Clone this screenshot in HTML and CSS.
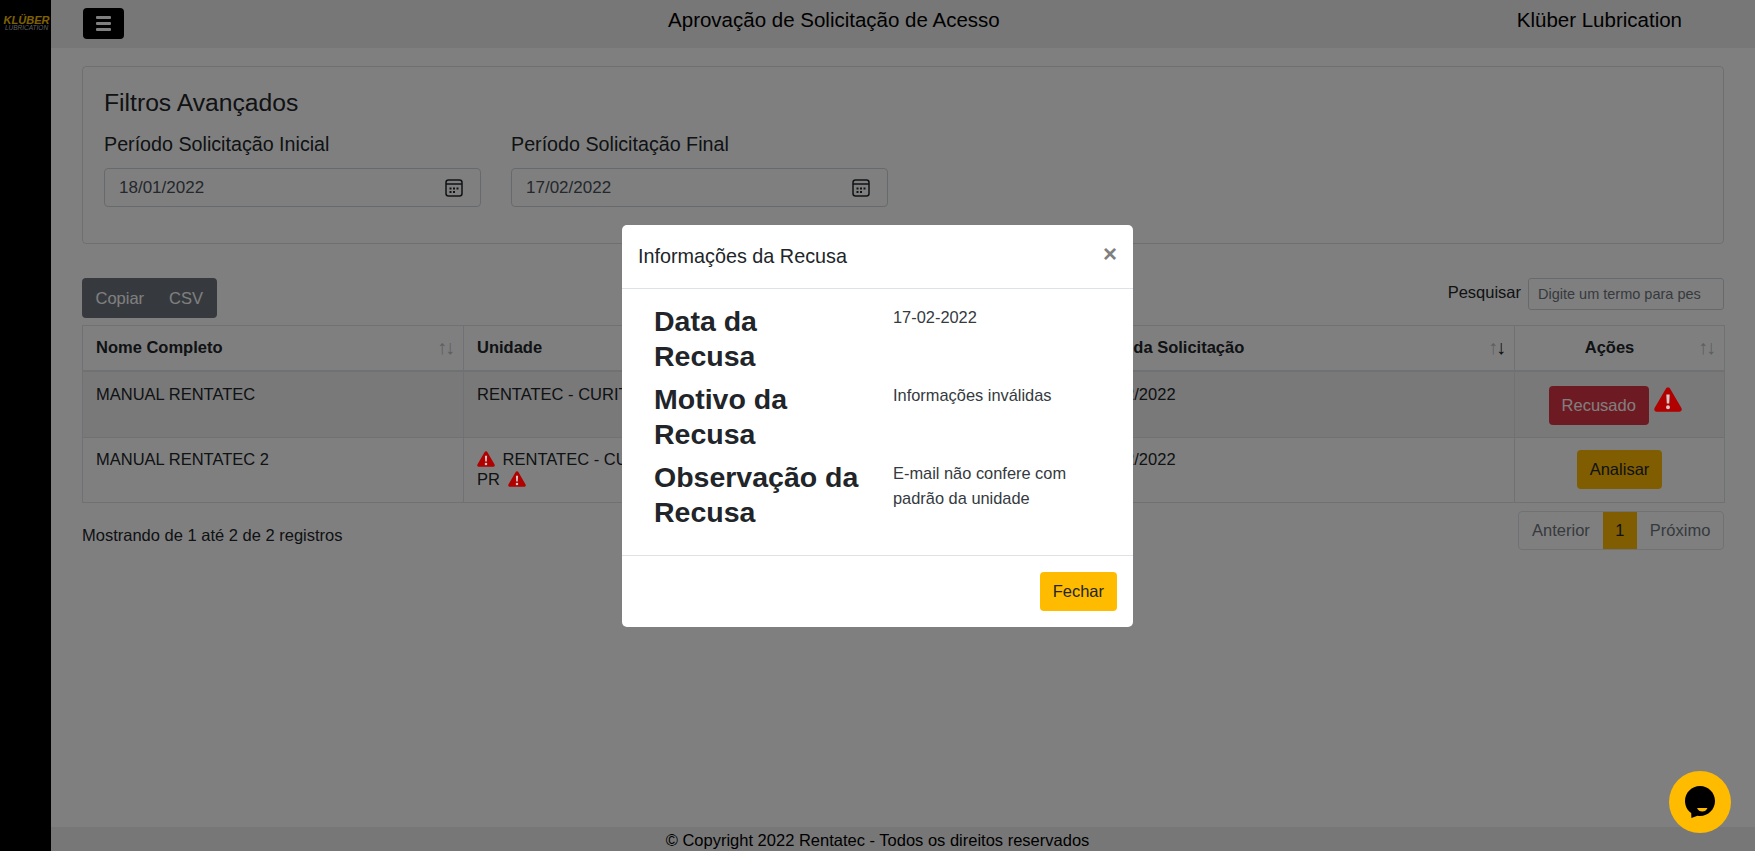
FILE: index.html
```html
<!DOCTYPE html>
<html lang="pt-BR">
<head>
    <meta charset="UTF-8">
    <meta name="viewport" content="width=device-width, initial-scale=1.0">
    <title>Aprovação de Solicitação de Acesso</title>
    <link rel="stylesheet" href="styles.css">
</head>
<body>
    <svg class="icon-defs" width="0" height="0">
        <symbol id="warn" viewBox="0 0 28 25">
            <path d="M14 0.5c-1 0-1.8.5-2.3 1.4L.6 21c-1 1.7.2 3.8 2.2 3.8h22.4c2 0 3.200-2.100 2.200-3.800L16.300 1.900C15.800 1 15 .5 14 .5z" fill="currentColor"/>
            <path d="M12.300 7.500h3.400l-.5 9h-2.400zM14 18.200a2 2 0 1 1 0 4 2 2 0 0 1 0-4z" fill="#d8c8c8"/>
        </symbol>
        <symbol id="calendar" viewBox="0 0 18 18">
            <rect x="1" y="1" width="16" height="16" rx="2.500" fill="none" stroke="currentColor" stroke-width="1.500"/>
            <path d="M1 5h16" stroke="currentColor" stroke-width="1.500"/>
            <path d="M4.500 8.500h2v2h-2zM8 8.500h2v2H8zM11.500 8.500h2v2h-2zM4.500 12h2v2h-2zM8 12h2v2H8z" fill="currentColor"/>
        </symbol>
    </svg>

    <div class="layout">
        <aside class="sidebar">
            <div class="logo">
                <span class="logo-name">KLÜBER</span>
                <span class="logo-sub">LUBRICATION</span>
            </div>
        </aside>

        <div class="page">
            <header class="topbar">
                <button class="menu-btn" type="button" aria-label="Menu">
                    <span></span><span></span><span></span>
                </button>
                <div class="topbar-title">Aprovação de Solicitação de Acesso</div>
                <div class="topbar-company">Klüber Lubrication</div>
            </header>

            <main class="content">
                <section class="filters">
                    <h2>Filtros Avançados</h2>
                    <div class="filter-row">
                        <div class="filter">
                            <label>Período Solicitação Inicial</label>
                            <div class="date-field">
                                <span>18/01/2022</span>
                                <svg class="calendar-icon"><use href="#calendar"/></svg>
                            </div>
                        </div>
                        <div class="filter">
                            <label>Período Solicitação Final</label>
                            <div class="date-field">
                                <span>17/02/2022</span>
                                <svg class="calendar-icon"><use href="#calendar"/></svg>
                            </div>
                        </div>
                    </div>
                </section>

                <div class="toolbar">
                    <div class="export-group">
                        <button type="button">Copiar</button>
                        <button type="button">CSV</button>
                    </div>
                    <div class="search">
                        <label for="search-input">Pesquisar</label>
                        <input id="search-input" type="text" placeholder="Digite um termo para pesquisar">
                    </div>
                </div>

                <table class="requests">
                    <colgroup>
                        <col class="col-name">
                        <col class="col-unit">
                        <col class="col-mail">
                        <col class="col-date">
                        <col class="col-actions">
                    </colgroup>
                    <thead>
                        <tr>
                            <th><div class="th-inner">Nome Completo<span class="sort"><i>↑</i><i>↓</i></span></div></th>
                            <th><div class="th-inner">Unidade<span class="sort"><i>↑</i><i>↓</i></span></div></th>
                            <th><div class="th-inner">E-mail<span class="sort"><i>↑</i><i>↓</i></span></div></th>
                            <th><div class="th-inner">Data da Solicitação<span class="sort"><i>↑</i><i class="on">↓</i></span></div></th>
                            <th><div class="th-inner th-center"><span class="th-label">Ações</span><span class="sort"><i>↑</i><i>↓</i></span></div></th>
                        </tr>
                    </thead>
                    <tbody>
                        <tr class="striped">
                            <td>MANUAL RENTATEC</td>
                            <td>RENTATEC - CURITIBA - PR</td>
                            <td></td>
                            <td>17/02/2022</td>
                            <td class="actions">
                                <button class="btn btn-red" type="button">Recusado</button>
                                <svg class="warn-big"><use href="#warn"/></svg>
                            </td>
                        </tr>
                        <tr>
                            <td>MANUAL RENTATEC 2</td>
                            <td><svg class="warn-small"><use href="#warn"/></svg> RENTATEC - CURITIBA - PR <svg class="warn-small warn-after"><use href="#warn"/></svg></td>
                            <td></td>
                            <td>17/02/2022</td>
                            <td class="actions">
                                <button class="btn btn-yellow" type="button">Analisar</button>
                            </td>
                        </tr>
                    </tbody>
                </table>

                <div class="table-footer">
                    <div class="table-info">Mostrando de 1 até 2 de 2 registros</div>
                    <div class="pagination">
                        <a href="#">Anterior</a>
                        <a href="#" class="current">1</a>
                        <a href="#">Próximo</a>
                    </div>
                </div>
            </main>

            <footer class="copyright">© Copyright 2022 Rentatec - Todos os direitos reservados</footer>
        </div>
    </div>

    <div class="backdrop"></div>

    <div class="modal-wrap">
        <div class="modal">
            <div class="modal-header">
                <h5>Informações da Recusa</h5>
                <button class="modal-close" type="button" aria-label="Fechar">×</button>
            </div>
            <div class="modal-body">
                <div class="info-row">
                    <h3>Data da Recusa</h3>
                    <p>17-02-2022</p>
                </div>
                <div class="info-row">
                    <h3>Motivo da Recusa</h3>
                    <p>Informações inválidas</p>
                </div>
                <div class="info-row">
                    <h3>Observação da Recusa</h3>
                    <p>E-mail não confere com padrão da unidade</p>
                </div>
            </div>
            <div class="modal-footer">
                <button class="btn btn-yellow" type="button">Fechar</button>
            </div>
        </div>
    </div>

    <button class="chat-btn" type="button" aria-label="Chat">
        <svg viewBox="0 0 32 34" width="32" height="34">
            <path d="M16 1C7.700 1 1 7.700 1 16c0 5 2.400 9.400 6.200 12.100L7.400 33l6.100-2.300c.8.2 1.700.3 2.500.3 8.300 0 15-6.700 15-15S24.300 1 16 1z" fill="#000"/>
            <path d="M13 23h10.500c-1 2.400-2.900 3.500-5.200 3.500S14 25.400 13 23z" fill="#ffbb00"/>
        </svg>
    </button>
</body>
</html>
```

FILE: styles.css
```css
* {
    box-sizing: border-box;
}
html, body {
    height: 100%;
}
body {
    margin: 0;
    font-family: "Liberation Sans", Arial, sans-serif;
    font-size: 16.500px;
    line-height: 24px;
    color: #212529;
    background: #fff;
    overflow: hidden;
}
button {
    font-family: inherit;
}
.icon-defs {
    position: absolute;
}
.layout {
    display: flex;
    height: 851px;
}

/* sidebar */
.sidebar {
    width: 51px;
    flex: none;
    background: #000;
    padding: 15px 0 0 2px;
}
.logo {
    display: flex;
    flex-direction: column;
    align-items: center;
    font-style: italic;
}
.logo-name {
    color: #ffc400;
    font-size: 11px;
    font-weight: 700;
    line-height: 10px;
}
.logo-sub {
    color: #bbb;
    font-size: 6.500px;
    line-height: 6px;
}

/* top bar */
.page {
    flex: 1;
    min-width: 0;
    display: flex;
    flex-direction: column;
}
.topbar {
    height: 48px;
    flex: none;
    background: #eee;
    padding: 0 73px 0 32px;
    display: flex;
    align-items: center;
    justify-content: space-between;
    font-size: 20.500px;
    color: #000;
}
.menu-btn {
    width: 41px;
    height: 31px;
    margin-top: -2px;
    background: #000;
    border: none;
    border-radius: 4px;
    display: flex;
    flex-direction: column;
    align-items: center;
    justify-content: center;
    gap: 3px;
    padding: 0;
}
.menu-btn span {
    width: 15px;
    height: 3px;
    background: #fff;
    border-radius: 1px;
}
.topbar-title {
    margin-left: 27px;
    margin-top: -8px;
}
.topbar-company {
    margin-top: -8px;
}

/* filters */
.content {
    flex: 1;
    padding: 18px 31px 0;
}
.filters {
    height: 178px;
    border: 1px solid rgba(0,0,0,.125);
    border-radius: 4px;
    padding: 21px;
}
.filters h2 {
    margin: 0;
    font-size: 24.700px;
    font-weight: 400;
    line-height: 29px;
}
.filter-row {
    display: flex;
    gap: 30px;
    margin-top: 12px;
}
.filter {
    width: 377px;
}
.filter label {
    display: block;
    font-size: 19.700px;
    line-height: 30px;
    margin-bottom: 9px;
}
.date-field {
    height: 39px;
    border: 1px solid #ced4da;
    border-radius: 4px;
    padding: 0 17px 0 14px;
    display: flex;
    align-items: center;
    justify-content: space-between;
    color: #495057;
    font-size: 17px;
}
.calendar-icon {
    width: 18px;
    height: 18px;
    color: #212529;
}

/* export buttons and search */
.toolbar {
    display: flex;
    justify-content: space-between;
    margin-top: 34px;
    height: 47px;
}
.export-group {
    display: flex;
    height: 40px;
    background: #6c757d;
    border-radius: 4px;
    padding: 0 1px;
}
.export-group button {
    background: none;
    border: none;
    color: #fff;
    font-size: 16.500px;
    padding: 0 12.500px;
}
.search {
    display: flex;
    align-items: flex-start;
    gap: 7px;
}
.search label {
    line-height: 28px;
}
.search input {
    width: 196px;
    height: 32px;
    margin-top: 0;
    border: 1px solid #ced4da;
    border-radius: 3px;
    padding: 0 22px 0 9px;
    font-family: inherit;
    font-size: 14.500px;
    background: #fff;
}
.search input::placeholder {
    color: #6c757d;
}

/* table */
.requests {
    width: 100%;
    table-layout: fixed;
    border-collapse: collapse;
}
.col-name { width: 381px; }
.col-unit { width: 245px; }
.col-mail { width: 371px; }
.col-date { width: 435px; }
.col-actions { width: 210px; }
.requests th, .requests td {
    border: 1px solid #dee2e6;
    text-align: left;
    vertical-align: top;
}
.requests th {
    height: 45px;
    padding: 0 9px 2px 13px;
    vertical-align: middle;
    border-bottom-width: 2px;
}
.th-inner {
    display: flex;
    align-items: center;
    justify-content: space-between;
}
.th-label {
    flex: 1;
    text-align: center;
    padding-right: 8px;
}
.sort {
    display: flex;
    font-weight: 400;
    font-size: 20px;
    line-height: 20px;
}
.sort i {
    font-style: normal;
    width: 8px;
    text-align: center;
    opacity: .3;
    display: flex;
    justify-content: center;
}
.sort i.on {
    opacity: 1;
}
.requests td {
    padding: 11px 13px 0;
    height: 65px;
    line-height: 20px;
}
.requests .striped td {
    height: 67px;
    padding-top: 12px;
    background: rgba(0,0,0,.05);
}
.requests td.actions {
    padding: 12px 0 0;
    text-align: center;
}
.requests .striped td.actions {
    padding: 14px 8px 0 0;
}
.warn-big {
    width: 28px;
    height: 25px;
    color: #b00000;
    position: relative;
    z-index: 1060;
    vertical-align: top;
    margin: 1px 0 0 1px;
}
.warn-small {
    width: 18px;
    height: 16px;
    color: #b00000;
    position: relative;
    z-index: 1060;
    vertical-align: -2px;
    margin-right: 3px;
}
.warn-after {
    margin-left: 3px;
}

/* buttons */
.btn {
    height: 39px;
    border: none;
    border-radius: 4px;
    font-size: 16.500px;
    padding: 0 13px;
    vertical-align: top;
}
.btn-red {
    background: #dc3545;
    color: #fff;
}
.btn-yellow {
    background: #ffbb00;
    color: #212529;
}

/* table footer */
.table-footer {
    display: flex;
    justify-content: space-between;
    margin-top: 8px;
}
.table-info {
    margin-top: 12px;
}
.pagination {
    display: flex;
    height: 39px;
    border: 1px solid #dee2e6;
    border-radius: 4px;
    line-height: 36px;
}
.pagination a {
    padding: 0 12.700px;
    color: #6c757d;
    text-decoration: none;
}
.pagination a.current {
    background: #ffbb00;
    color: #212529;
}

.copyright {
    height: 24px;
    flex: none;
    background: #eee;
    text-align: center;
    color: #000;
    padding: 1px 51px 0 0;
    line-height: 24px;
}

/* modal */
.backdrop {
    position: fixed;
    inset: 0;
    background: rgba(0,0,0,.5);
    z-index: 1040;
}
.modal-wrap {
    position: fixed;
    inset: 0;
    z-index: 1050;
    display: flex;
    justify-content: center;
    align-items: flex-start;
    padding-top: 225px;
}
.modal {
    width: 511px;
    height: 402px;
    background: #fff;
    border-radius: 5px;
    display: flex;
    flex-direction: column;
}
.modal-header {
    height: 64px;
    flex: none;
    border-bottom: 1px solid #dee2e6;
    padding: 0 16px;
    display: flex;
    align-items: center;
    justify-content: space-between;
}
.modal-header h5 {
    margin: -2px 0 0;
    font-size: 19.800px;
    font-weight: 400;
    line-height: 30px;
}
.modal-close {
    border: none;
    background: none;
    padding: 0;
    font-size: 24px;
    font-weight: 700;
    line-height: 24px;
    color: #808080;
    margin-top: -6px;
}
.modal-body {
    flex: 1;
    padding: 15px 16px 0 32px;
}
.info-row {
    display: grid;
    grid-template-columns: 239px 1fr;
    margin-bottom: 8px;
}
.info-row h3 {
    margin: 0;
    padding-right: 30px;
    font-size: 28.500px;
    font-weight: 700;
    line-height: 35px;
}
.info-row p {
    margin: 1px 0 0;
    font-size: 16.400px;
    line-height: 25px;
    color: #343a40;
}
.modal-footer {
    height: 72px;
    flex: none;
    border-top: 1px solid #dee2e6;
    padding: 16px;
    display: flex;
    justify-content: flex-end;
}

/* chat */
.chat-btn {
    position: fixed;
    left: 1669px;
    top: 771px;
    width: 62px;
    height: 62px;
    border: none;
    border-radius: 50%;
    background: #ffbb00;
    z-index: 1070;
    padding: 0;
    display: flex;
    align-items: center;
    justify-content: center;
}
```
